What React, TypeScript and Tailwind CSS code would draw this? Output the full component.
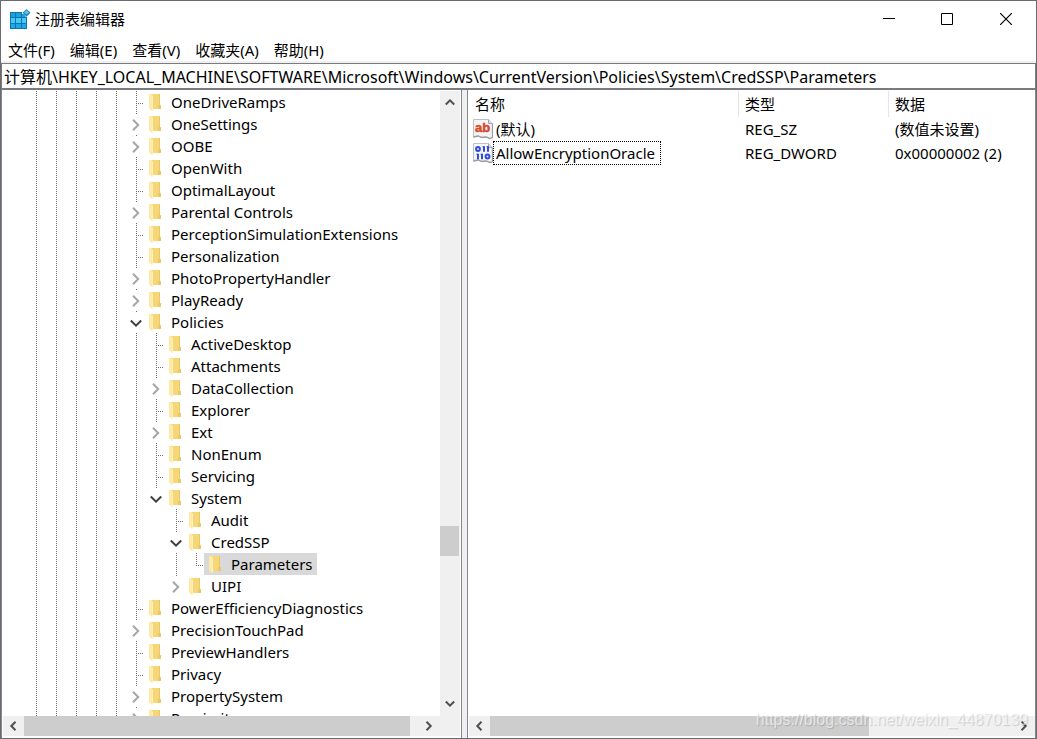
import React from "react";

type Node = { name: string; depth: number; kind: "leaf" | "closed" | "open"; selected?: boolean; last?: boolean };

const NODES: Node[] = [
  { name: "OneDriveRamps", depth: 0, kind: "leaf" },
  { name: "OneSettings", depth: 0, kind: "closed" },
  { name: "OOBE", depth: 0, kind: "closed" },
  { name: "OpenWith", depth: 0, kind: "leaf" },
  { name: "OptimalLayout", depth: 0, kind: "leaf" },
  { name: "Parental Controls", depth: 0, kind: "closed" },
  { name: "PerceptionSimulationExtensions", depth: 0, kind: "leaf" },
  { name: "Personalization", depth: 0, kind: "leaf" },
  { name: "PhotoPropertyHandler", depth: 0, kind: "closed" },
  { name: "PlayReady", depth: 0, kind: "closed" },
  { name: "Policies", depth: 0, kind: "open" },
  { name: "ActiveDesktop", depth: 1, kind: "leaf" },
  { name: "Attachments", depth: 1, kind: "leaf" },
  { name: "DataCollection", depth: 1, kind: "closed" },
  { name: "Explorer", depth: 1, kind: "leaf" },
  { name: "Ext", depth: 1, kind: "closed" },
  { name: "NonEnum", depth: 1, kind: "leaf" },
  { name: "Servicing", depth: 1, kind: "leaf" },
  { name: "System", depth: 1, kind: "open", last: true },
  { name: "Audit", depth: 2, kind: "leaf" },
  { name: "CredSSP", depth: 2, kind: "open" },
  { name: "Parameters", depth: 3, kind: "leaf", selected: true, last: true },
  { name: "UIPI", depth: 2, kind: "closed", last: true },
  { name: "PowerEfficiencyDiagnostics", depth: 0, kind: "leaf" },
  { name: "PrecisionTouchPad", depth: 0, kind: "closed" },
  { name: "PreviewHandlers", depth: 0, kind: "leaf" },
  { name: "Privacy", depth: 0, kind: "leaf" },
  { name: "PropertySystem", depth: 0, kind: "closed" },
  { name: "Proximity", depth: 0, kind: "closed" },
];

// Five ancestor levels sit above the first visible one.
const ANCESTORS = 5;

// Whether the vertical guide of each level runs past the given row.
function guides(depth: number): boolean[] {
  const list = Array.from({ length: ANCESTORS }, () => true);
  for (let d = 0; d < depth; d++) list.push(d !== 1);
  return list;
}

const MENU = ["文件(F)", "编辑(E)", "查看(V)", "收藏夹(A)", "帮助(H)"];

const DOTS_V = "bg-[repeating-linear-gradient(to_bottom,#707070_0_1px,transparent_1px_2px)]";
const DOTS_H = "bg-[repeating-linear-gradient(to_right,#707070_0_1px,transparent_1px_2px)]";

function AppIcon() {
  return (
    <svg width="22" height="22" viewBox="0 0 22 22" aria-hidden="true">
      <path d="M1 4h17v17H1z" fill="#0878b4" />
      <path d="M2 5h4v4H2zM7 5h5v4H7z" fill="#1f9fd8" />
      <path d="M2 10h4v5H2zM7 10h5v5H7zM13 10h4v5h-4z" fill="#4cc6f2" />
      <path d="M2 16h4v4H2zM7 16h5v4H7zM13 16h4v4h-4z" fill="#20a8e2" />
      <path d="M13 1h8v8h-8z" fill="#fff" />
      <path d="M13 6h2l2 3h-4z" fill="#1f9fd8" />
      <path d="M17.500 1 21.500 4.800 17.500 8.800 13.500 4.800z" fill="#1b87bf" />
      <path d="M17.500 2.200 20 4.500 17.500 6.300 15 4.500z" fill="#67c3e6" />
    </svg>
  );
}

function Folder() {
  return (
    <svg width="12" height="17" viewBox="0 0 12 17" className="shrink-0" aria-hidden="true">
      <path d="M2 0h9v11h1v4H2z" fill="#f5d778" />
      <path d="M10 0h1v11h-1zM9 11h3v4H9z" fill="#eac866" />
      <path d="M0 0h2l2 2v14l-1 1-3-2.500z" fill="#ffe9a6" />
      <path d="M3 1.500 4 2v14l-1 1z" fill="#fff0c0" />
    </svg>
  );
}

const CHEVRONS = {
  left: "M8.500 1.800 4.300 6l4.200 4.200",
  right: "M3.500 1.800 7.700 6l-4.200 4.200",
  up: "M1.800 8.500 6 4.300l4.200 4.200",
  down: "M1.800 3.500 6 7.700l4.200-4.200",
  treeRight: "M3 .8 8.200 6 3 11.200",
  treeDown: "M.8 3.500 6 8.700l5.200-5.200",
};

function Chevron({ dir, className }: { dir: keyof typeof CHEVRONS; className?: string }) {
  return (
    <svg width="12" height="12" viewBox="0 0 12 12" fill="none" stroke="currentColor" strokeWidth="2" className={className} aria-hidden="true">
      <path d={CHEVRONS[dir]} />
    </svg>
  );
}

function ValueIcon({ binary }: { binary?: boolean }) {
  return (
    <svg width="20" height="20" viewBox="0 0 20 20" className="shrink-0" aria-hidden="true">
      <path d="M.5.5h15l4 4v14l-2 1-4-1.500-4 .5-4-1.500-5 1z" fill="#f5f5f8" stroke="#c0c0c4" />
      <path d="M15.500.5v4h4" fill="#dcdce0" stroke="#a5a5aa" />
      <path d="M.5 18 5 17l4 1.500 4-.5 4 1.500 2.500-1V5" fill="none" stroke="#9a9aa0" strokeWidth="1.300" />
      {binary ? (
        <g fill="none" stroke="#2f4bd8" strokeWidth="2">
          <ellipse cx="5" cy="6" rx="1.900" ry="1.900" />
          <path d="M11 3.200v5.600M15 3.200v5.600" />
          <path d="M9.500 3.800H11M13.500 3.800H15" strokeWidth="1" />
          <path d="M5 10.700v5.600M9 10.700v5.600" />
          <path d="M3.500 11.300H5M7.500 11.300H9" strokeWidth="1" />
          <ellipse cx="14.500" cy="13.500" rx="1.900" ry="1.900" />
        </g>
      ) : (
        <text x="2" y="13" fontFamily="'Liberation Sans', sans-serif" fontWeight="700" fontSize="13" fill="#d8492c" stroke="#d8492c" strokeWidth=".5">ab</text>
      )}
    </svg>
  );
}

function TreeRow({ node }: { node: Node }) {
  return (
    <li role="treeitem" aria-selected={!!node.selected} className="flex h-[22px] shrink-0 items-stretch">
      {guides(node.depth).map((on, i) => (
        <span key={i} className="flex w-5 shrink-0 justify-end pr-[9px]">
          {on && <span className={`w-px ${DOTS_V}`} />}
        </span>
      ))}
      {node.kind === "leaf" ? (
        <span className="flex w-[18px] shrink-0 pl-[10px]">
          <span className={`w-px ${DOTS_V} ${node.last ? "h-[13px]" : ""}`} />
          <span className={`mt-3 ml-px h-px w-[7px] ${DOTS_H}`} />
        </span>
      ) : (
        <button
          type="button"
          aria-label={`${node.kind === "open" ? "Collapse" : "Expand"} ${node.name}`}
          className="flex w-[18px] shrink-0 items-center justify-end bg-[linear-gradient(#707070,#707070)] bg-[length:1px_1px] bg-[position:10px_0] bg-no-repeat pt-0.5 pr-0.5"
        >
          {node.kind === "open" ? (
            <Chevron dir="treeDown" className="shrink-0 text-[#404040]" />
          ) : (
            <Chevron dir="treeRight" className="shrink-0 text-[#a6a6a6]" />
          )}
        </button>
      )}
      <button
        type="button"
        className={`flex items-center gap-[10px] pr-1 pl-[5px] whitespace-nowrap ${node.selected ? "bg-[#d9d9d9]" : ""}`}
      >
        <Folder />
        <span>{node.name}</span>
      </button>
    </li>
  );
}

function HScroll({ thumb }: { thumb: string }) {
  return (
    <div className="flex h-5 bg-[#f0f0f0] text-[#505050]">
      <button type="button" aria-label="Scroll left" className="flex w-[21px] shrink-0 items-center justify-center pr-0.5">
        <Chevron dir="left" />
      </button>
      <div className="min-w-0 flex-1">
        <div className={`h-full bg-[#cdcdcd] ${thumb}`} />
      </div>
      <button type="button" aria-label="Scroll right" className="flex w-[22px] shrink-0 items-center justify-center">
        <Chevron dir="right" />
      </button>
    </div>
  );
}

export default function App() {
  return (
    <div className="relative flex h-screen flex-col overflow-hidden border border-[#6b6b6f] bg-white font-['Noto_Sans','Noto_Sans_CJK_SC',sans-serif] text-[15px] leading-[22px] text-black">
      <header className="flex h-9 shrink-0 items-center pl-2">
        <AppIcon />
        <h1 className="ml-1 flex-1">注册表编辑器</h1>
        <button type="button" aria-label="Minimize" className="flex h-full w-[58px] items-center justify-center">
          <svg width="12" height="12" viewBox="0 0 12 12"><path d="M0 5.500h12" stroke="#000" /></svg>
        </button>
        <button type="button" aria-label="Maximize" className="flex h-full w-[58px] items-center justify-center">
          <svg width="12" height="12" viewBox="0 0 12 12"><path d="M.5.5h11v11H.5z" fill="none" stroke="#000" /></svg>
        </button>
        <button type="button" aria-label="Close" className="flex h-full w-[60px] items-center justify-center">
          <svg width="12" height="12" viewBox="0 0 12 12"><path d="M0 0l12 12M12 0 0 12" stroke="#000" strokeWidth="1.200" /></svg>
        </button>
      </header>
      <nav className="flex h-6 shrink-0 items-center gap-[15px] pt-[2px] pl-[7px]">
        {MENU.map((m) => (
          <button key={m} type="button" className="whitespace-nowrap">{m}</button>
        ))}
      </nav>
      <div className="shrink-0 border-t-2 border-[#f0f0f0]">
        <input
          aria-label="Path"
          readOnly
          value="计算机\HKEY_LOCAL_MACHINE\SOFTWARE\Microsoft\Windows\CurrentVersion\Policies\System\CredSSP\Parameters"
          className="block h-[27px] w-full border border-b-2 border-[#7a7a80] pb-px pl-[2px] text-base outline-none"
        />
      </div>
      <main className="flex min-h-0 flex-1 bg-[#f0f0f0]">
        <section className="flex w-[461px] shrink-0 flex-col border-r border-l border-[#828790] bg-white p-px pb-[2px]">
          <div className="flex min-h-0 flex-1">
            <ul role="tree" aria-label="Registry keys" className="flex min-w-0 flex-1 flex-col overflow-hidden pl-[23px]">
              {NODES.map((n) => (
                <TreeRow key={n.name} node={n} />
              ))}
            </ul>
            <div className="flex w-5 shrink-0 flex-col bg-[#f0f0f0] pr-px text-[#505050]">
              <button type="button" aria-label="Scroll up" className="flex h-[22px] items-center justify-center">
                <Chevron dir="up" />
              </button>
              <div className="flex flex-1 flex-col">
                <div className="flex-[413]" />
                <div className="h-[30px] bg-[#cdcdcd]" />
                <div className="flex-[138]" />
              </div>
              <button type="button" aria-label="Scroll down" className="flex h-[22px] items-center justify-center pb-0.5">
                <Chevron dir="down" />
              </button>
            </div>
          </div>
          <div className="flex bg-[#f0f0f0]">
            <div className="min-w-0 flex-1"><HScroll thumb="w-[98%]" /></div>
            <div className="w-5" />
          </div>
        </section>
        <section className="ml-[5px] flex min-w-0 flex-1 flex-col border-r border-l border-[#828790] bg-white pt-px pb-[2px] pl-px">
          <div className="min-h-0 flex-1">
            <table className="w-full table-fixed border-separate border-spacing-0 text-left">
              <colgroup>
                <col className="w-[270px]" />
                <col className="w-[150px]" />
                <col />
              </colgroup>
              <thead>
                <tr className="h-[26px]">
                  <th className="border-r border-[#e5e5e5] p-0 pl-[6px] font-normal">名称</th>
                  <th className="border-r border-[#e5e5e5] p-0 pl-[6px] font-normal">类型</th>
                  <th className="p-0 pl-[6px] font-normal">数据</th>
                </tr>
              </thead>
              <tbody>
                <tr className="h-6">
                  <td className="p-0 pl-1">
                    <div className="flex h-6 items-center">
                      <ValueIcon />
                      <span className="px-[3px]">(默认)</span>
                    </div>
                  </td>
                  <td className="p-0 pl-[6px]">REG_SZ</td>
                  <td className="p-0 pl-[6px]">(数值未设置)</td>
                </tr>
                <tr className="h-6">
                  <td className="p-0 pl-1">
                    <div className="flex h-6 items-center">
                      <ValueIcon binary />
                      <span className="flex h-6 items-center border border-dotted border-black pr-[5px] pl-[2px]">AllowEncryptionOracle</span>
                    </div>
                  </td>
                  <td className="p-0 pl-[6px]">REG_DWORD</td>
                  <td className="p-0 pl-[6px]">0x00000002 (2)</td>
                </tr>
              </tbody>
            </table>
          </div>
          <HScroll thumb="w-[72.500%]" />
        </section>
      </main>
      <p className="pointer-events-none absolute right-2 bottom-1.5 font-['Liberation_Sans',sans-serif] text-base text-white/60 [text-shadow:1px_1px_1px_rgba(0,0,0,0.16)]">
        https://blog.csdn.net/weixin_44870139
      </p>
    </div>
  );
}
